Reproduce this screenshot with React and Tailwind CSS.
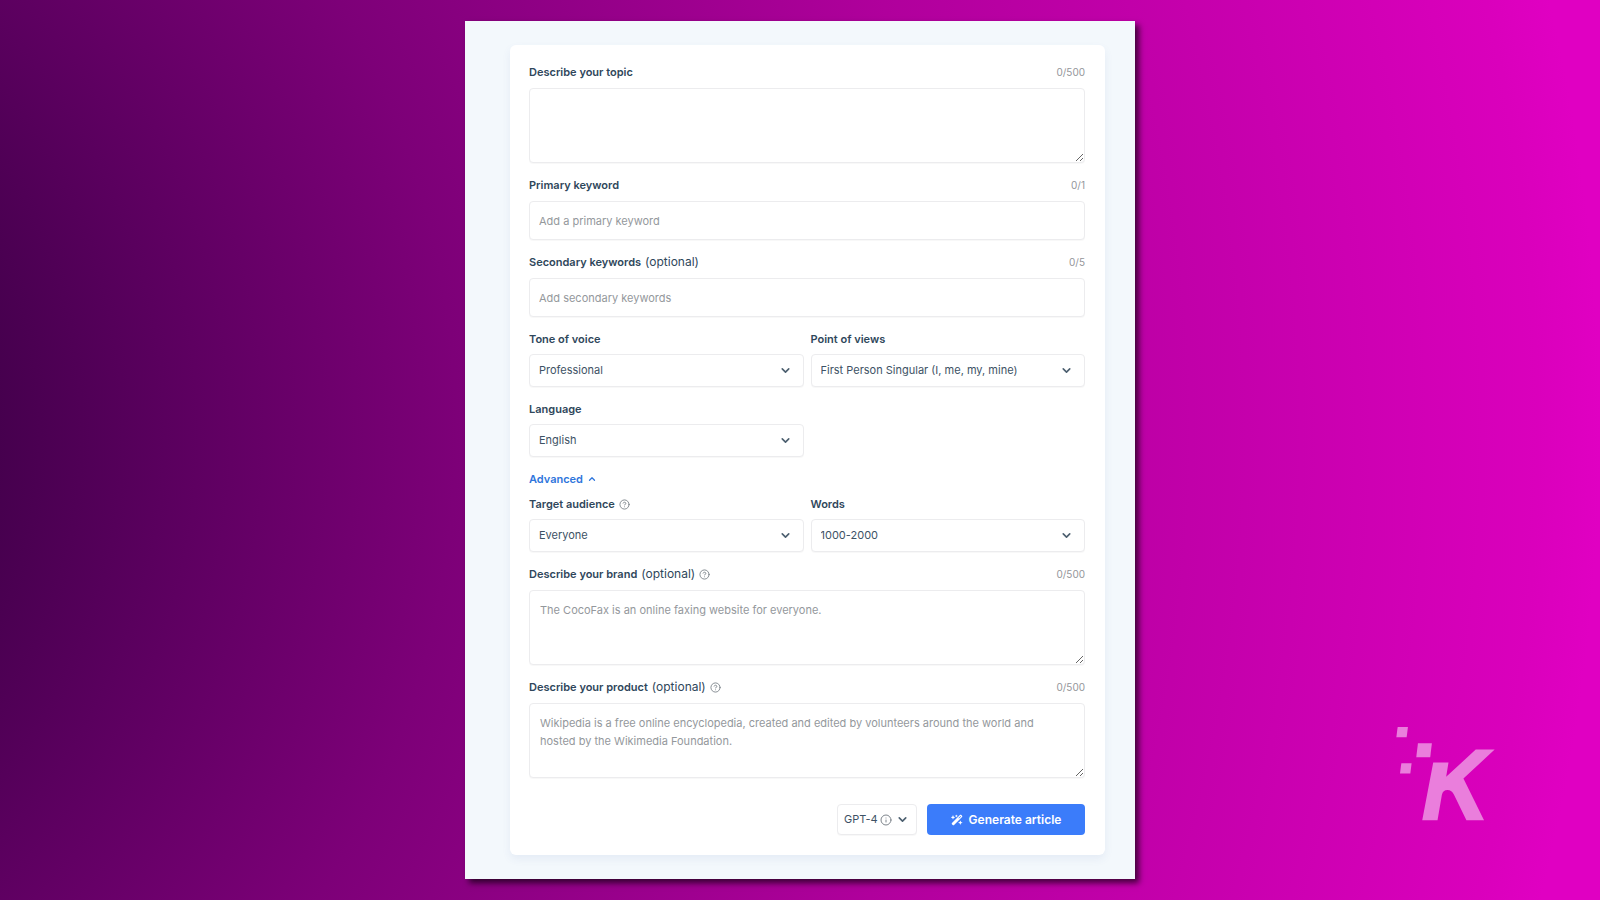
import { ChevronDown, ChevronUp, CircleHelp, Info } from "lucide-react";
import { FaWandMagicSparkles } from "react-icons/fa6";

const fieldBase =
    "block w-full rounded-sm border border-[#ececee] bg-white text-[11px] text-[#3d5265] placeholder:text-[#94989c] shadow-[0_1px_1px_rgba(0,0,0,0.03)] focus:outline-none focus:border-[#3b7cf9]";

/**
 * Label row with an optional hint icon and character counter
 */
function FieldLabel({ id, text, optional, help, count }) {
    return (
        <div className="flex h-4 items-center justify-between">
            <label htmlFor={id} className="flex items-center gap-1 text-[11px] leading-4 font-semibold text-[#2f475b]">
                {text}
                {optional && <span className="text-xs leading-4 font-normal">(optional)</span>}
                {help && <CircleHelp size={11} strokeWidth={2} className="text-[#7d848b]" />}
            </label>
            {count && <span className="text-[10px] leading-4 text-[#94969a]">{count}</span>}
        </div>
    );
}

function TextField({ id, placeholder, ...label }) {
    return (
        <div className="flex flex-col gap-2">
            <FieldLabel id={id} {...label} />
            <input id={id} type="text" placeholder={placeholder} className={`${fieldBase} h-[39px] px-[9px]`} />
        </div>
    );
}

function AreaField({ id, placeholder, ...label }) {
    return (
        <div className="flex flex-col gap-2">
            <FieldLabel id={id} {...label} />
            <textarea
                id={id}
                placeholder={placeholder}
                className={`${fieldBase} h-[75px] resize-y py-[10px] pr-6 pl-[10px] leading-[18px]`}
            />
        </div>
    );
}

function SelectField({ id, options, ...label }) {
    return (
        <div className="flex flex-col gap-[7px]">
            <FieldLabel id={id} {...label} />
            <div className="relative">
                <select id={id} className={`${fieldBase} h-[33px] appearance-none pr-8 pl-[9px]`}>
                    {options.map((option) => (
                        <option key={option}>{option}</option>
                    ))}
                </select>
                <ChevronDown
                    size={13}
                    strokeWidth={3}
                    className="pointer-events-none absolute inset-y-0 right-3 my-auto text-[#4d6070]"
                />
            </div>
        </div>
    );
}

// Brand mark in the corner of the backdrop
function BrandMark() {
    return (
        <svg
            viewBox="78 76 298 286"
            className="pointer-events-none absolute right-[105px] bottom-[79px] w-[99px] fill-[#ea7edc]"
            aria-hidden="true"
        >
            <path d="M83 79h31l-4 31H79z" />
            <path d="M144 128h42l-5 42h-42z" />
            <path d="M94 188h31l-4 31H90z" />
            <path d="M190 186h46l-7 43 89-82h57l-94 87 62 126h-53l-37-76q-7-15-20-15-14 0-17 15l-13 76h-46z" />
        </svg>
    );
}

function App() {
    return (
        <div className="relative flex min-h-screen items-center justify-center bg-[radial-gradient(130%_220%_at_-30%_48%,#46004e_23%,#5a005e_31%,#7d0078_45%,#b0009c_69%,#da00bc_97%,#e000c2_100%)] py-5 font-[Inter,sans-serif]">
            <BrandMark />
            <main className="relative w-full max-w-[670px] bg-[#f3f8fc] pt-6 pr-[30px] pb-6 pl-[45px] shadow-[4px_4px_6px_rgba(0,0,0,0.65)]">
                <form className="flex flex-col gap-[14px] rounded-md bg-white pt-[19px] pr-5 pb-5 pl-[19px] shadow-[0_4px_8px_rgba(60,90,160,0.08)]">
                    <AreaField id="topic" text="Describe your topic" count="0/500" />
                    <TextField id="primary" text="Primary keyword" count="0/1" placeholder="Add a primary keyword" />
                    <TextField id="secondary" text="Secondary keywords" optional count="0/5" placeholder="Add secondary keywords" />

                    <div className="grid grid-cols-2 gap-x-[7px] gap-y-[14px]">
                        <SelectField id="tone" text="Tone of voice" options={["Professional", "Casual", "Friendly"]} />
                        <SelectField
                            id="pov"
                            text="Point of views"
                            options={["First Person Singular (I, me, my, mine)", "Second Person", "Third Person"]}
                        />
                        <SelectField id="language" text="Language" options={["English", "Spanish", "French"]} />
                    </div>

                    <div className="flex flex-col gap-[9px]">
                        <button type="button" className="flex items-center gap-1 self-start text-[11px] leading-4 font-semibold text-[#2f76dc]">
                            Advanced
                            <ChevronUp size={10} strokeWidth={3} />
                        </button>
                        <div className="grid grid-cols-2 gap-x-[7px]">
                            <SelectField id="audience" text="Target audience" help options={["Everyone", "Beginners", "Experts"]} />
                            <SelectField id="words" text="Words" options={["1000-2000", "500-1000"]} />
                        </div>
                    </div>

                    <AreaField
                        id="brand"
                        text="Describe your brand"
                        optional
                        help
                        count="0/500"
                        placeholder="The CocoFax is an online faxing website for everyone."
                    />
                    <AreaField
                        id="product"
                        text="Describe your product"
                        optional
                        help
                        count="0/500"
                        placeholder="Wikipedia is a free online encyclopedia, created and edited by volunteers around the world and hosted by the Wikimedia Foundation."
                    />

                    <div className="flex justify-end gap-[10px] pt-3">
                        <div className="relative w-20">
                            <select aria-label="Model" className={`${fieldBase} h-[31px] appearance-none pl-[6px]`}>
                                <option>GPT-4</option>
                                <option>GPT-3.5</option>
                            </select>
                            <div className="pointer-events-none absolute inset-y-0 right-2 flex items-center gap-1 text-[#4d6070]">
                                <Info size={12} strokeWidth={2} className="text-[#7d848b]" />
                                <ChevronDown size={13} strokeWidth={3} />
                            </div>
                        </div>
                        <button
                            type="submit"
                            className="flex h-[31px] w-[158px] items-center justify-center gap-[6px] rounded-sm bg-[#3b7cfa] text-xs font-semibold text-white"
                        >
                            <FaWandMagicSparkles size={12} />
                            Generate article
                        </button>
                    </div>
                </form>
            </main>
        </div>
    );
}

export default App;
